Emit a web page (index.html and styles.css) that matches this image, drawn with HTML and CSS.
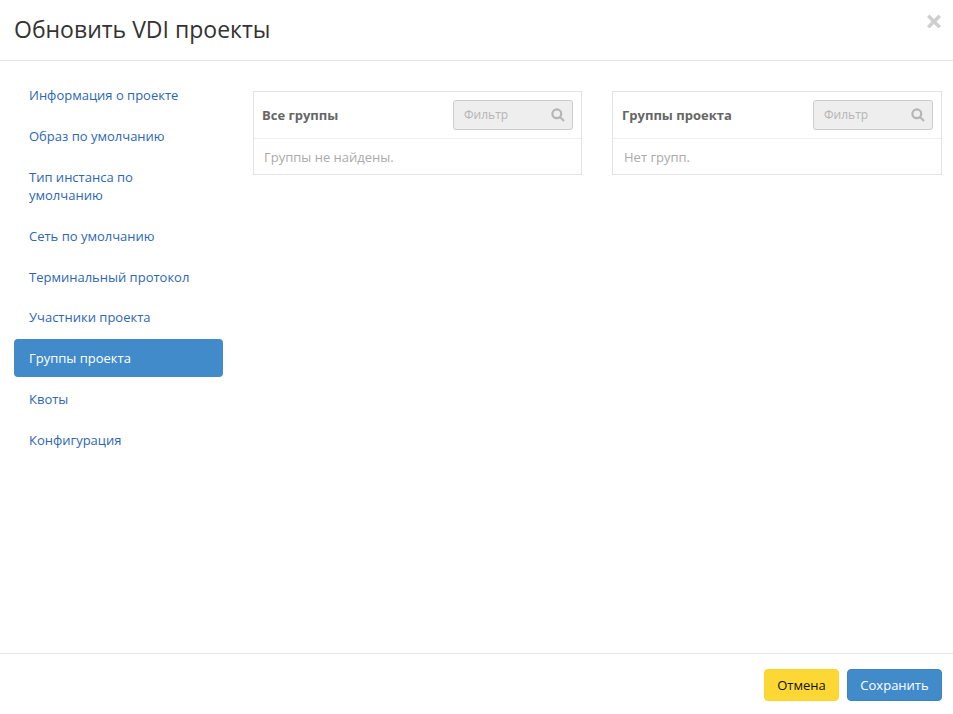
FILE: index.html
```html
<!DOCTYPE html>
<html lang="ru">
<head>
<meta charset="utf-8">
<title>Обновить VDI проекты</title>
<link rel="stylesheet" href="styles.css">
</head>
<body>
<div class="modal">
  <header class="modal-header">
    <h1 class="modal-title">Обновить VDI проекты</h1>
    <svg class="close-icon" width="14" height="14" viewBox="0 0 14 14" aria-hidden="true"><path d="M2.5 0.5 7 5 11.5 0.5 14 3 9.5 7.5 14 12 11.5 14.5 7 10 2.5 14.5 0 12 4.5 7.5 0 3Z"/></svg>
  </header>
  <main class="modal-body">
    <nav class="nav">
      <a class="nav-item">Информация о проекте</a>
      <a class="nav-item">Образ по умолчанию</a>
      <a class="nav-item">Тип инстанса по умолчанию</a>
      <a class="nav-item">Сеть по умолчанию</a>
      <a class="nav-item">Терминальный протокол</a>
      <a class="nav-item">Участники проекта</a>
      <a class="nav-item active">Группы проекта</a>
      <a class="nav-item">Квоты</a>
      <a class="nav-item">Конфигурация</a>
    </nav>
    <section class="panels">
      <div class="panel">
        <div class="panel-head">
          <span class="panel-title">Все группы</span>
          <div class="filter">
            <span class="filter-text">Фильтр</span>
            <svg class="search-icon" width="14" height="14" viewBox="0 0 14 14" aria-hidden="true"><circle cx="5.8" cy="5.8" r="4.4"/><path d="M9 9l4 4"/></svg>
          </div>
        </div>
        <div class="panel-row">Группы не найдены.</div>
      </div>
      <div class="panel panel-wide">
        <div class="panel-head">
          <span class="panel-title">Группы проекта</span>
          <div class="filter">
            <span class="filter-text">Фильтр</span>
            <svg class="search-icon" width="14" height="14" viewBox="0 0 14 14" aria-hidden="true"><circle cx="5.8" cy="5.8" r="4.4"/><path d="M9 9l4 4"/></svg>
          </div>
        </div>
        <div class="panel-row">Нет групп.</div>
      </div>
    </section>
  </main>
  <footer class="modal-footer">
    <button class="btn btn-cancel">Отмена</button>
    <button class="btn btn-save">Сохранить</button>
  </footer>
</div>
</body>
</html>
```
FILE: styles.css
```css
* { box-sizing: border-box; }
html, body { margin: 0; height: 100%; }
body {
  background: #fff;
  font-family: "Open Sans", sans-serif;
  font-size: 13px;
  line-height: 18.57px;
  color: #333;
}
.modal { display: flex; flex-direction: column; height: 714px; overflow: hidden; }
.modal-header {
  height: 61px;
  flex: none;
  border-bottom: 1px solid #e5e5e5;
  padding: 0 12px 0 14px;
  display: flex;
  justify-content: space-between;
  align-items: flex-start;
}
.modal-title {
  margin: 14px 0 0;
  font-size: 23px;
  font-weight: 400;
  line-height: 30px;
  color: #333;
}
.close-icon { margin-top: 14px; fill: #cfcfcf; }
.modal-body { flex: 1; display: flex; padding: 15px 11px 0 14px; gap: 30px; }
.nav { width: 209px; flex: none; display: flex; flex-direction: column; gap: 2.67px; padding-top: 0.3px; }
.nav-item {
  display: block;
  padding: 10px 15px 9.5px;
  border-radius: 4px;
  color: #2d67b4;
}
.nav-item.active { background: #428bca; color: #fff; }
.panels { flex: 1; display: grid; grid-template-columns: 329px 330px; column-gap: 30px; align-content: start; padding-top: 15px; }
.panel { border: 1px solid #e3e3e3; }
.panel-head {
  height: 47px;
  display: flex;
  align-items: center;
  justify-content: space-between;
  padding: 0 8px;
  border-bottom: 1px solid #eee;
}
.panel-title { font-weight: 700; color: #666; }
.panel-wide .panel-title { margin-left: 1px; }
.filter {
  width: 120px;
  height: 30px;
  display: flex;
  align-items: center;
  justify-content: space-between;
  padding: 0 7px 0 10px;
  background: #eee;
  border: 1px solid #ccc;
  border-radius: 3px;
}
.filter-text { color: #b5b5b5; font-size: 12px; }
.search-icon { fill: none; stroke: #b5b5b5; stroke-width: 2.2; }
.panel-row { padding: 9px 10px 7px; color: #aaa; height: 35px; }
.panel-wide .panel-row { padding-left: 11px; }
.modal-footer {
  height: 61px;
  flex: none;
  border-top: 1px solid #e5e5e5;
  display: flex;
  justify-content: flex-end;
  align-items: flex-start;
  gap: 8px;
  padding: 15px 11px 0 0;
}
.btn {
  height: 32px;
  padding: 0 12px;
  font: inherit;
  line-height: 18px;
  border-radius: 4px;
  border: 1px solid transparent;
}
.btn-cancel { width: 75px; background: #fdd835; border-color: #fbd52f; color: #111; }
.btn-save { width: 95px; background: #428bca; border-color: #3f84c0; color: #fff; }
```
